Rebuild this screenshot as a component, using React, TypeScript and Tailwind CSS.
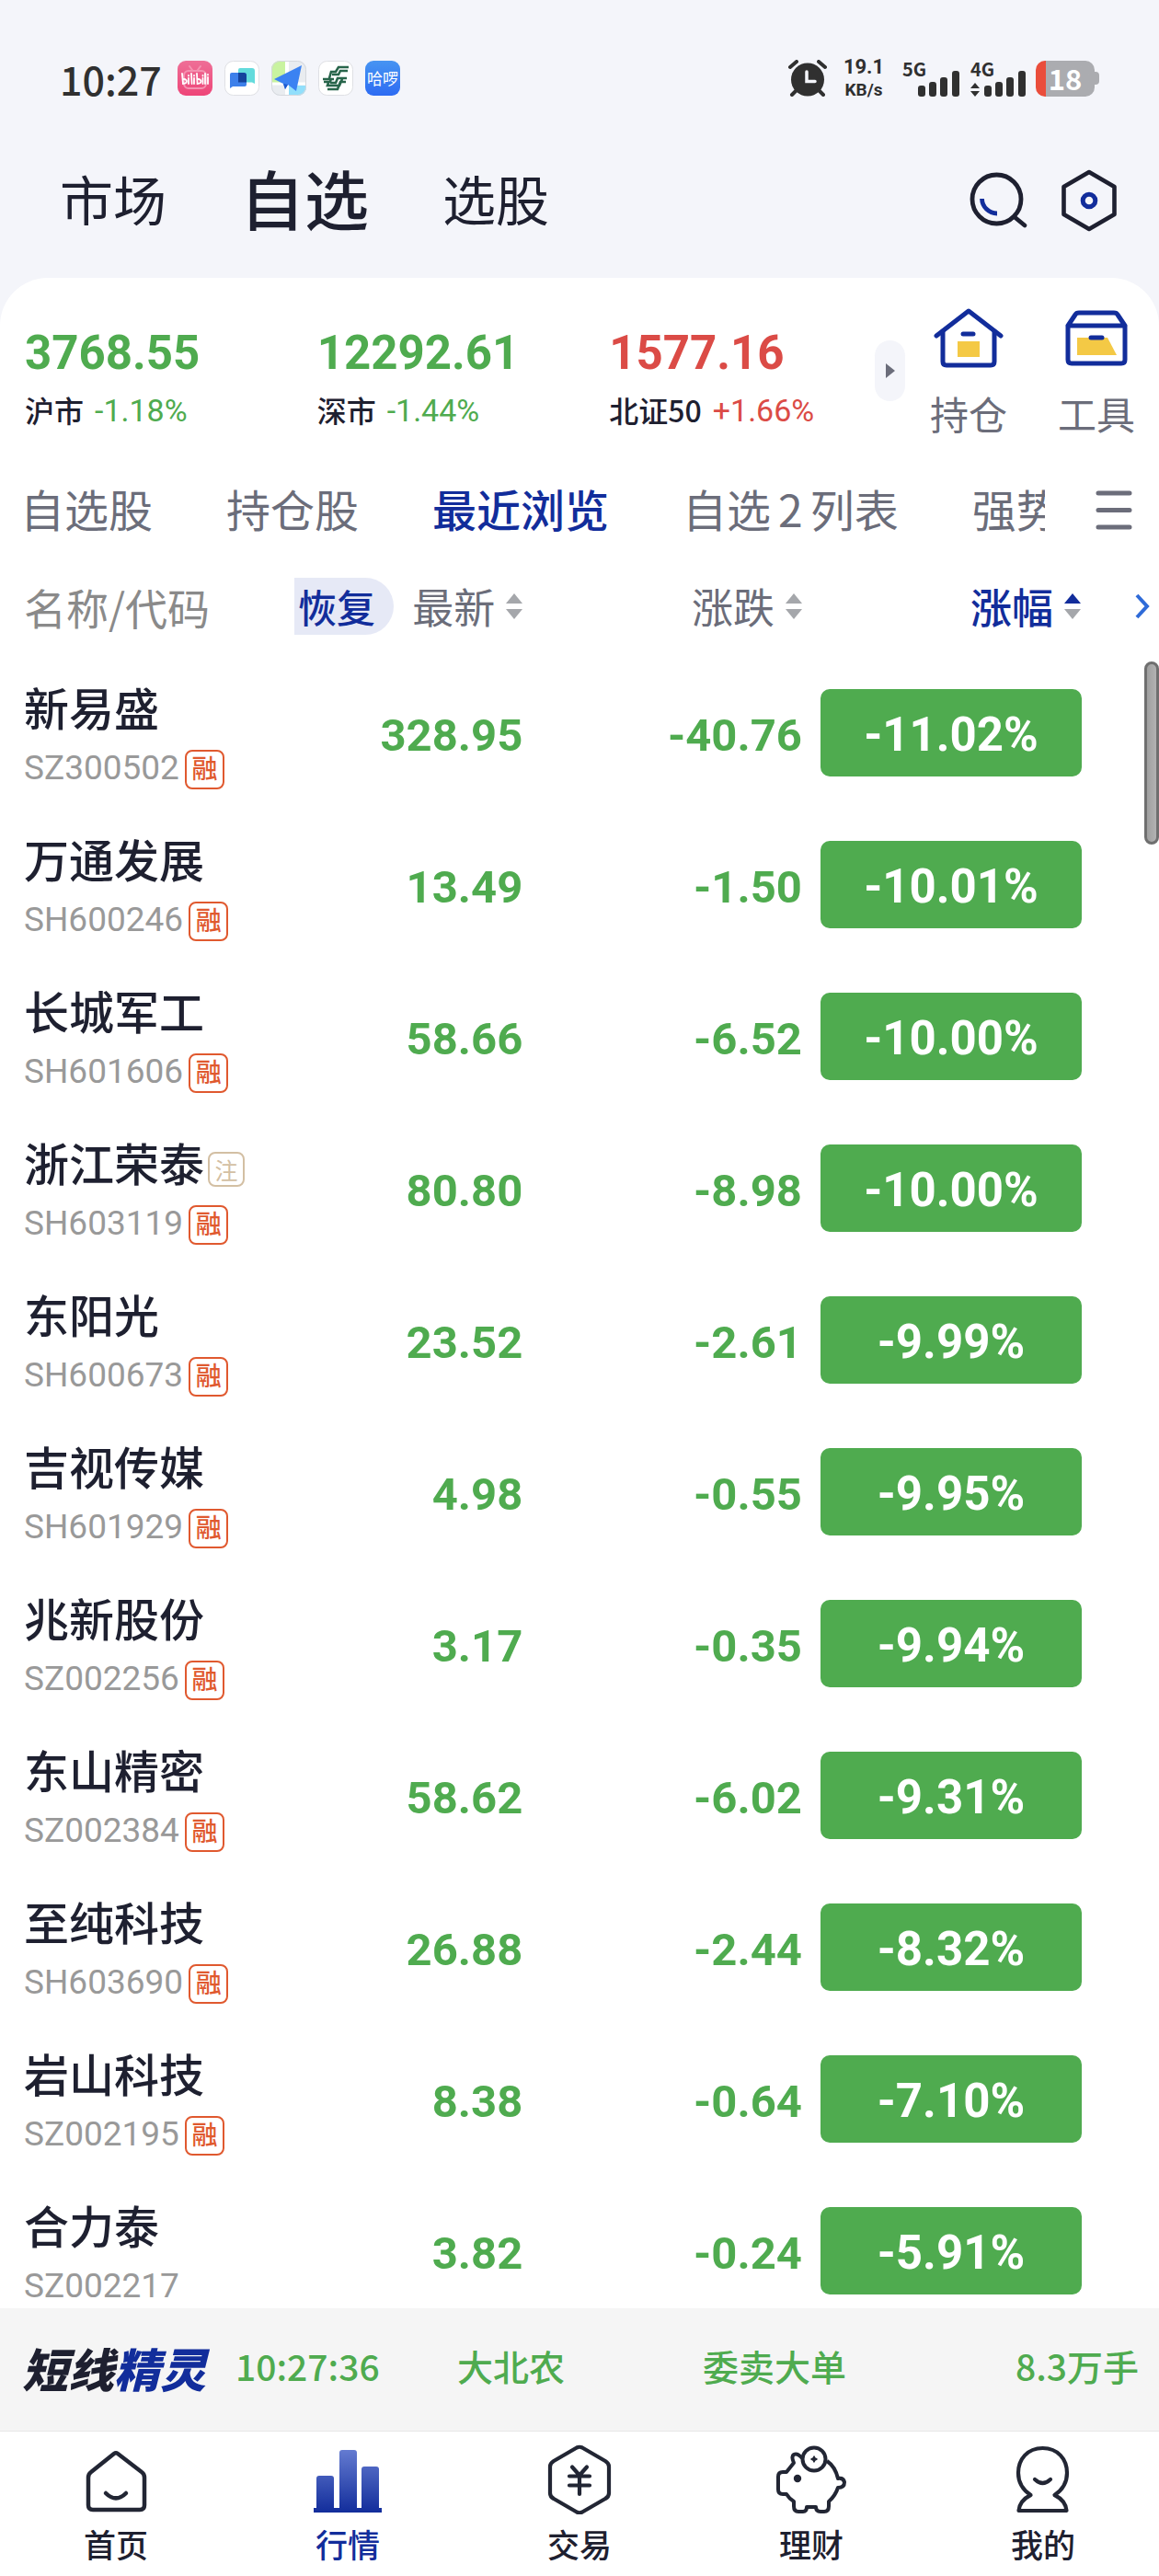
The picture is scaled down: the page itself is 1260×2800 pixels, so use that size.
import React from "react";

type Stock = {
  name: string;
  code: string;
  price: string;
  change: string;
  percent: string;
  margin?: boolean;
  note?: boolean;
};

const stocks: Stock[] = [
  { name: "新易盛", code: "SZ300502", price: "328.95", change: "-40.76", percent: "-11.02%", margin: true },
  { name: "万通发展", code: "SH600246", price: "13.49", change: "-1.50", percent: "-10.01%", margin: true },
  { name: "长城军工", code: "SH601606", price: "58.66", change: "-6.52", percent: "-10.00%", margin: true },
  { name: "浙江荣泰", code: "SH603119", price: "80.80", change: "-8.98", percent: "-10.00%", margin: true, note: true },
  { name: "东阳光", code: "SH600673", price: "23.52", change: "-2.61", percent: "-9.99%", margin: true },
  { name: "吉视传媒", code: "SH601929", price: "4.98", change: "-0.55", percent: "-9.95%", margin: true },
  { name: "兆新股份", code: "SZ002256", price: "3.17", change: "-0.35", percent: "-9.94%", margin: true },
  { name: "东山精密", code: "SZ002384", price: "58.62", change: "-6.02", percent: "-9.31%", margin: true },
  { name: "至纯科技", code: "SH603690", price: "26.88", change: "-2.44", percent: "-8.32%", margin: true },
  { name: "岩山科技", code: "SZ002195", price: "8.38", change: "-0.64", percent: "-7.10%", margin: true },
  { name: "合力泰", code: "SZ002217", price: "3.82", change: "-0.24", percent: "-5.91%" },
];

const indices = [
  { value: "3768.55", name: "沪市", change: "-1.18%", up: false },
  { value: "12292.61", name: "深市", change: "-1.44%", up: false },
  { value: "1577.16", name: "北证50", change: "+1.66%", up: true },
];

function SignalBars() {
  return (
    <svg className="absolute right-0 bottom-0 h-7 w-[45px]" viewBox="0 0 45 28" fill="#303030" aria-hidden="true">
      <rect x="0" y="16" width="8" height="12" rx="3" />
      <rect x="12" y="12" width="8" height="16" rx="3" />
      <rect x="24" y="7" width="8" height="21" rx="3" />
      <rect x="37" y="0" width="8" height="28" rx="3" />
    </svg>
  );
}

function StatusBar() {
  return (
    <div className="flex h-[170px] items-center pr-[65px] pl-[65px] text-[#303030]">
      <span className="w-32 text-[43px] leading-[56px] font-medium">10:27</span>
      <div className="flex gap-[13px]">
        <svg className="size-[38px]" viewBox="0 0 38 38" role="img" aria-label="bilibili">
          <defs>
            <linearGradient id="pinkFill" x1="0" y1="0" x2="0" y2="1">
              <stop offset="0" stopColor="#ee6f97" />
              <stop offset="1" stopColor="#ee4578" />
            </linearGradient>
          </defs>
          <rect width="38" height="38" rx="9" fill="url(#pinkFill)" />
          <g fill="none" stroke="#f493b1" strokeWidth="2" strokeLinecap="round">
            <rect x="7" y="11" width="24" height="19" rx="5" />
            <path d="M13 6l3 4M25 6l-3 4" />
          </g>
          <g fill="none" stroke="#fff" strokeWidth="1.8" strokeLinecap="round">
            <path d="M5 14l1 11c5 0 5-5 1-5M12 19v6M12 16v.5M15 14l.6 11M18 19v6M18 16v.5M21 14l.6 11c5 0 5-5 1-5M27.5 19v6M27.5 16v.5M30 14v11M33 18v7M33 15v.5" />
          </g>
        </svg>
        <svg className="size-[38px]" viewBox="0 0 38 38" aria-hidden="true">
          <rect x=".5" y=".5" width="37" height="37" rx="9" fill="#fff" stroke="#dfe0e4" />
          <path d="M17 8h13q3 0 3 3v14l-3-1.500H15V10q0-2 2-2z" fill="#63dbdc" />
          <path d="M8 13h13q3 0 3 3v10q0 2-2 2H9l-3 2V15q0-2 2-2z" fill="#3d80ea" />
          <path d="M15 13h6q3 0 3 3v7.500h-9z" fill="#15439c" />
        </svg>
        <svg className="size-[38px]" viewBox="0 0 38 38" aria-hidden="true">
          <defs>
            <clipPath id="mapClip">
              <rect width="38" height="38" rx="9" />
            </clipPath>
          </defs>
          <g clipPath="url(#mapClip)">
            <rect width="38" height="38" fill="#e9ecf0" />
            <path d="M0 0h15v24H0z" fill="#c9f3a0" />
            <path d="M19 27h19v11H19z" fill="#92dffb" />
            <path d="M15 0h4v38h-4zM0 23.500h38v3H0z" fill="#fff" />
          </g>
          <path d="M33 5L3 20l10 5 2 6 3-5 9 7z" fill="#3b82f2" />
          <path d="M18 26l-3 5-2-6z" fill="#1d5bd0" />
          <rect x=".5" y=".5" width="37" height="37" rx="9" fill="none" stroke="#d5d8dd" />
        </svg>
        <svg className="size-[38px]" viewBox="0 0 38 38" aria-hidden="true">
          <rect x=".5" y=".5" width="37" height="37" rx="9" fill="#fff" stroke="#dfe0e4" />
          <path
            d="M33 7H22l-3 5h-5l-2 7M32 11h-8l-2 4h-7M5 20h12M14 19l-1 4H6M31 19H21l-2 5h-6M30 23h-6l-3 8H10M26 20l-3 7H10l1-3"
            fill="none"
            stroke="#28654b"
            strokeWidth="2.600"
          />
        </svg>
        <div className="flex size-[38px] items-center justify-center rounded-[9px] bg-gradient-to-b from-[#4794f2] to-[#2e6bf2] text-[17px] leading-5 text-white">
          哈啰
        </div>
      </div>

      <svg className="ml-auto h-10 w-[42px]" viewBox="0 0 42 40" aria-hidden="true">
        <circle cx="21" cy="21.500" r="18" fill="#303030" />
        <path d="M2 8l7-6M40 8l-7-6M4 38l5-5M38 38l-5-5" stroke="#303030" strokeWidth="4" strokeLinecap="round" />
        <path d="M20 13v10.500h9" fill="none" stroke="#f4f5fa" strokeWidth="3.500" strokeLinecap="round" />
      </svg>
      <div className="ml-3.5 flex w-[52px] flex-col items-center font-['Roboto',sans-serif] font-bold">
        <span className="text-[22px] leading-[26px]">19.1</span>
        <span className="text-[19px] leading-[24px]">KB/s</span>
      </div>
      <div className="relative ml-4 h-10 w-[62px]">
        <span className="block text-[20px] leading-5 font-bold">5G</span>
        <SignalBars />
      </div>
      <div className="relative ml-3 h-10 w-[60px]">
        <span className="block text-[20px] leading-5 font-bold">4G</span>
        <svg className="absolute bottom-0 left-0 h-[15px] w-2.5" viewBox="0 0 10 15" fill="#303030" aria-hidden="true">
          <path d="M5 0l5 6H0zM5 15l5-6H0z" />
        </svg>
        <SignalBars />
      </div>
      <div className="ml-[11px] flex items-center">
        <div className="flex h-[39px] w-16 items-center justify-center rounded-[10px] bg-gradient-to-r from-[#ea4d3b] from-[17%] to-[#abacb0] to-[17%] text-[31px] leading-9 font-bold text-white">
          18
        </div>
        <div className="h-3.5 w-[5px] rounded-r bg-[#abacb0]" />
      </div>
    </div>
  );
}

function Header() {
  return (
    <header className="mb-9 flex h-24 items-center pr-[46px] pl-[65px] text-[#1e2030]">
      <nav className="flex items-center gap-20 pb-1.5" aria-label="频道">
        <a href="#market" className="text-[58px] leading-[72px]">市场</a>
        <a href="#watchlist" aria-current="page" className="text-[70px] leading-[84px] font-medium">自选</a>
        <a href="#picker" className="text-[58px] leading-[72px]">选股</a>
      </nav>
      <button type="button" aria-label="搜索" className="ml-auto">
        <svg className="h-[62px] w-16" viewBox="0 0 64 62" fill="none">
          <circle cx="29.500" cy="29.500" r="26.500" stroke="#1e2030" strokeWidth="4.800" />
          <path d="M49 49l11 9" stroke="#1e2030" strokeWidth="4.800" strokeLinecap="round" />
          <path d="M13.500 29A16.500 16.500 0 0 0 30 45" stroke="#122d9b" strokeWidth="4.800" />
        </svg>
      </button>
      <button type="button" aria-label="设置" className="ml-9">
        <svg className="h-[68px] w-[60px]" viewBox="0 0 60 68" fill="none">
          <path d="M30 3l27.500 16v30L30 65 2.500 49V19z" stroke="#1e2030" strokeWidth="4.600" strokeLinejoin="round" />
          <circle cx="30" cy="34" r="6.800" stroke="#122d9b" strokeWidth="5" />
        </svg>
      </button>
    </header>
  );
}

function IndexSummary() {
  return (
    <section className="flex items-start pt-8 pr-[26px] pb-8 pl-[27px]" aria-label="指数">
      <div className="grid flex-1 grid-cols-[11fr_11fr_10fr] pt-5">
        {indices.map((item) => (
          <div key={item.name} className={item.up ? "text-[#db4b46]" : "text-[#4fab4f]"}>
            <div className="font-['Roboto','Noto_Sans_CJK_SC',sans-serif] text-[51px] leading-[60px] font-bold">{item.value}</div>
            <div className="mt-2 flex items-center gap-3 text-[32px] leading-[44px] whitespace-nowrap">
              <span className="font-medium text-[#1e2030]">{item.name}</span>
              <span className="pt-0.5 font-['Roboto',sans-serif] text-[34px]">{item.change}</span>
            </div>
          </div>
        ))}
      </div>
      <button type="button" aria-label="更多指数" className="mt-9 mr-[27px] flex h-[66px] w-[33px] items-center justify-center rounded-full bg-[#f4f5fa]">
        <svg className="h-4 w-2.5" viewBox="0 0 10 16" fill="#6b6d7a">
          <path d="M0 0l10 8-10 8z" />
        </svg>
      </button>
      <button type="button" className="flex w-[84px] flex-col items-center text-[42px] leading-[53px] text-[#6b6d7a]">
        <svg className="mb-[22px] h-[66px] w-[76px]" viewBox="0 0 76 66" fill="none" stroke="#122d9b" strokeWidth="5" strokeLinecap="round" strokeLinejoin="round" aria-hidden="true">
          <path d="M3 31L38 4l35 27" />
          <path d="M10 26v33q0 4 4 4h48q4 0 4-4V26" />
          <path d="M26 37h24v17H26z" fill="#f4c945" stroke="none" />
          <path d="M32 29h11" />
        </svg>
        持仓
      </button>
      <button type="button" className="ml-[55px] flex w-[84px] flex-col items-center text-[42px] leading-[53px] text-[#6b6d7a]">
        <svg className="mb-[22px] h-[66px] w-[68px]" viewBox="0 0 68 66" fill="none" stroke="#122d9b" strokeWidth="5" strokeLinecap="round" strokeLinejoin="round" aria-hidden="true">
          <path d="M3 20h62v37q0 4-4 4H7q-4 0-4-4zM3 20L11 8q1-2 4-2h38q3 0 4 2l8 12" />
          <path d="M13 33h33l10 19H13z" fill="#f4c945" stroke="none" />
          <path d="M28 33h12" />
        </svg>
        工具
      </button>
    </section>
  );
}

function GroupTabs() {
  return (
    <div className="flex h-[100px] items-center justify-between pr-[29px] pb-1 pl-[22px] text-[#6b6d7a]">
      <nav className="flex flex-1 gap-20 overflow-hidden pb-1.5 text-[48px] leading-[72px] whitespace-nowrap" aria-label="自选分组">
        <a href="#all">自选股</a>
        <a href="#holding">持仓股</a>
        <a href="#recent" aria-current="page" className="font-medium text-[#122d9b]">最近浏览</a>
        <a href="#list2">自选<span className="mx-2">2</span>列表</a>
        <a href="#strong">强势</a>
      </nav>
      <button type="button" aria-label="分组菜单" className="ml-[55px]">
        <svg className="h-12 w-10" viewBox="0 0 40 48" stroke="#6b6d7a" strokeWidth="5" strokeLinecap="round">
          <path d="M3 5h34M3 23.500h34M3 42h34" />
        </svg>
      </button>
    </div>
  );
}

function SortMark({ up = false }: { up?: boolean }) {
  return (
    <svg className="h-7 w-[18px]" viewBox="0 0 18 28" aria-hidden="true">
      <path d="M9 0l9 11H0z" fill={up ? "#122d9b" : "#a5a7ab"} />
      <path d="M9 28l9-11H0z" fill="#a5a7ab" />
    </svg>
  );
}

function StockTable() {
  return (
    <div className="relative min-h-0 flex-1 overflow-hidden">
      <table className="w-full table-fixed border-collapse">
        <colgroup>
          <col className="w-[25.4%]" />
          <col className="w-[19.7%]" />
          <col className="w-[24.1%]" />
          <col />
        </colgroup>
        <thead className="text-[45px] leading-[60px] text-[#6b6d7a]">
          <tr className="h-[107px]">
            <th scope="col" className="pb-1 pl-[26px] text-left text-[46px] font-normal whitespace-nowrap text-[#8a8a8a]">名称/代码</th>
            <th scope="col" className="pb-1 font-normal">
              <div className="flex items-center justify-between">
                <button type="button" className="h-[62px] rounded-l-lg rounded-r-full bg-[#e6e9f6] pr-5 pl-1 text-[42px] font-medium text-[#122d9b]">恢复</button>
                <button type="button" className="flex items-center gap-3">最新<SortMark /></button>
              </div>
            </th>
            <th scope="col" className="pb-1 font-normal">
              <button type="button" className="ml-auto flex items-center gap-3">涨跌<SortMark /></button>
            </th>
            <th scope="col" aria-sort="ascending" className="pr-[9px] pb-1 font-normal">
              <div className="flex items-center justify-end">
                <button type="button" className="flex items-center gap-3 font-medium text-[#122d9b]">涨幅<SortMark up /></button>
                <button type="button" aria-label="更多列" className="ml-[58px]">
                  <svg className="h-7 w-[18px]" viewBox="0 0 18 28" fill="none" stroke="#2f6bd8" strokeWidth="4">
                    <path d="M3 2l11 12L3 26" />
                  </svg>
                </button>
              </div>
            </th>
          </tr>
        </thead>
        <tbody>
          {stocks.map((s) => (
            <tr key={s.code} className="h-[165px]">
              <td className="pt-0.5 pl-[26px] whitespace-nowrap">
                <div className="flex items-center text-[49px] leading-[58px] font-medium text-[#1e2030]">
                  {s.name}
                  {s.note && (
                    <span className="mt-4 ml-1 flex h-[38px] w-10 items-center justify-center rounded-lg border-2 border-[#d3bfa3] text-[25px] leading-[30px] font-normal text-[#d3bfa3]">注</span>
                  )}
                </div>
                <div className="mt-4 flex h-11 items-center font-['Roboto','Noto_Sans_CJK_SC',sans-serif] text-[37px] leading-[44px] text-[#999999]">
                  {s.code}
                  {s.margin && (
                    <span className="mt-1 ml-1.5 flex size-[43px] items-center justify-center rounded-lg border-2 border-[#e0592f] text-[28px] leading-8 font-medium text-[#e0592f]">融</span>
                  )}
                </div>
              </td>
              <td className="pt-1.5 text-right font-['Roboto',sans-serif] text-[49px] font-bold text-[#4fab4f]">{s.price}</td>
              <td className="pt-1.5 text-right font-['Roboto',sans-serif] text-[49px] font-bold text-[#4fab4f]">{s.change}</td>
              <td className="pr-[84px] pl-5">
                <div className="flex h-[95px] items-center justify-center rounded-[10px] bg-[#4fab4f] pt-1.5 font-['Roboto',sans-serif] text-[51px] font-bold text-white">{s.percent}</div>
              </td>
            </tr>
          ))}
        </tbody>
      </table>
      <div className="absolute top-[112px] right-0 h-[199px] w-4 rounded-full border-[3px] border-[#6f6f6f] bg-gradient-to-r from-[#a0a0a0] to-[#b2b2b2]" />
    </div>
  );
}

function Ticker() {
  return (
    <a href="#ticker" className="flex h-[133px] items-center bg-[#f5f5f5] pr-[22px] pb-2.5 pl-6 text-[39px] leading-[52px] font-medium text-[#4fab4f]">
      <strong className="pt-1 text-[50px] leading-[60px] font-black text-[#1e2030] italic">
        短线<span className="text-[#122d9b]">精灵</span>
      </strong>
      <span className="ml-8 w-[241px]">10:27:36</span>
      <span className="w-[267px]">大北农</span>
      <span>委卖大单</span>
      <span className="ml-auto">8.3万手</span>
    </a>
  );
}

const navIcon = "h-[76px] w-[78px]";

const navItems = [
  {
    label: "首页",
    icon: (
      <svg className={navIcon} viewBox="0 0 78 76" fill="none" stroke="#222634" strokeWidth="4.500" strokeLinecap="round" strokeLinejoin="round" aria-hidden="true">
        <path d="M37 10q2-1.500 4 0l26 20q3 2 3 6v30q0 5-5 5H14q-5 0-5-5V36q0-4 3-6z" />
        <path d="M28 53q11 11 22 0" />
      </svg>
    ),
  },
  {
    label: "行情",
    active: true,
    icon: (
      <svg className={navIcon} viewBox="0 0 78 76" aria-hidden="true">
        <defs>
          <linearGradient id="barFill" x1="0" y1="4" x2="0" y2="74" gradientUnits="userSpaceOnUse">
            <stop offset="0" stopColor="#667dd2" />
            <stop offset="1" stopColor="#122d9b" />
          </linearGradient>
        </defs>
        <g fill="url(#barFill)">
          <path d="M2 69h74v5H2z" />
          <rect x="5" y="34" width="19" height="38" rx="3" />
          <rect x="30" y="6" width="19" height="66" rx="3" />
          <rect x="54" y="24" width="19" height="48" rx="3" />
        </g>
      </svg>
    ),
  },
  {
    label: "交易",
    icon: (
      <svg className={navIcon} viewBox="0 0 78 76" fill="none" stroke="#222634" strokeWidth="4.200" strokeLinecap="round" strokeLinejoin="round" aria-hidden="true">
        <path d="M36 3.500q3-1.500 6 0l25 14.500q4 2.500 4 6v29q0 4-4 6L42 73.500q-3 1.500-6 0L11 59q-4-2-4-6V24q0-3.500 4-6z" />
        <path d="M31 24.500l8 9 8-9M28 34.500h22M28 44.500h22M39 34v20" />
      </svg>
    ),
  },
  {
    label: "理财",
    icon: (
      <svg className={navIcon} viewBox="0 0 78 76" fill="none" stroke="#222634" strokeWidth="4" strokeLinejoin="round" aria-hidden="true">
        <path d="M29 15q-5-6-9-4-3 2 0 9l-8 10H8q-5 0-5 5v14q0 5 5 5h4q3 5 8 8v5q0 6 5 6h5q4 0 4-5h10q0 5 5 5h4q5 0 5-6v-5q7-6 10-15 7 0 7-6-1-5-7-4-3-13-12-19" />
        <circle cx="42" cy="16" r="12.500" />
        <circle cx="24" cy="37" r="4.200" fill="#222634" stroke="none" />
        <path d="M42 13l1 2 2 1-2 1-1 2-1-2-2-1 2-1z" fill="#222634" strokeWidth="1.500" />
      </svg>
    ),
  },
  {
    label: "我的",
    icon: (
      <svg className={navIcon} viewBox="0 0 78 76" fill="none" stroke="#222634" strokeWidth="4.200" strokeLinecap="round" strokeLinejoin="round" aria-hidden="true">
        <path d="M25.500 55Q12 46 12 31C12 16 22 4 38.500 4S65 16 65 31Q65 46 51.500 55q12 6 13 17h-52q1-11 13-17z" />
        <path d="M30 38q8.500 8 17 0" />
      </svg>
    ),
  },
];

function BottomNav() {
  return (
    <nav className="grid grid-cols-5 border-t border-[#e6e6e6] bg-white pt-3.5 pb-2.5" aria-label="主导航">
      {navItems.map((item) => (
        <a
          key={item.label}
          href="#nav"
          aria-current={item.active ? "page" : undefined}
          className={`flex flex-col items-center gap-1.5 text-[35px] leading-[51px] font-medium ${item.active ? "text-[#122d9b]" : "text-[#1e2030]"}`}
        >
          {item.icon}
          {item.label}
        </a>
      ))}
    </nav>
  );
}

export default function App() {
  return (
    <div className="flex h-screen flex-col overflow-hidden bg-[#f4f5fa] font-['Noto_Sans_CJK_SC',sans-serif]">
      <StatusBar />
      <Header />
      <main className="flex min-h-0 flex-1 flex-col rounded-t-[52px] bg-white">
        <IndexSummary />
        <GroupTabs />
        <StockTable />
      </main>
      <Ticker />
      <BottomNav />
    </div>
  );
}
